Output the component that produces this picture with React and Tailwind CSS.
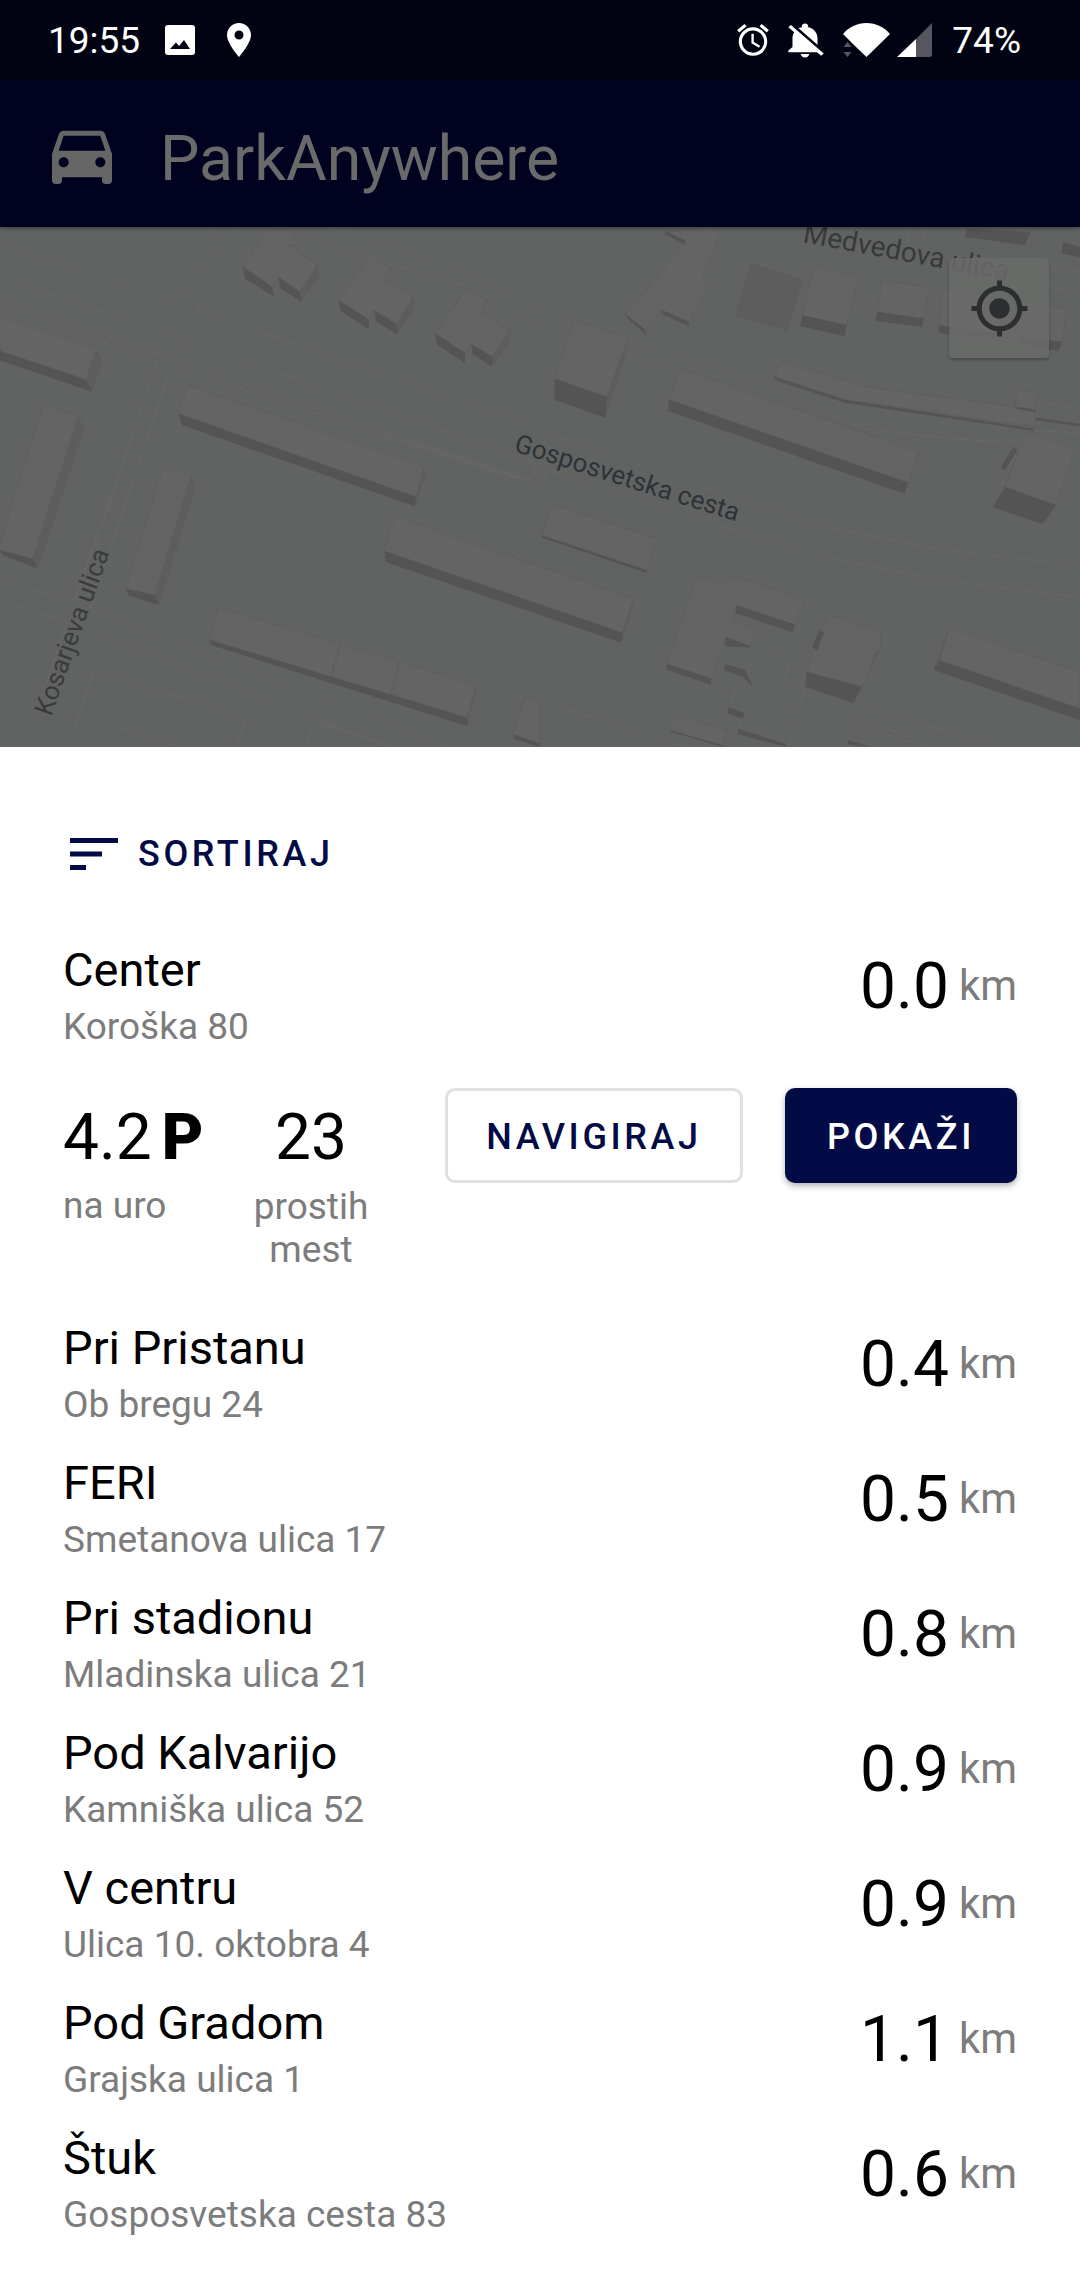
import React from "react";

// map shapes are noted per quadrant of the map, q() turns them into page pixels
const q = (ox, oy, pts) => pts.map(([x, y]) => `${(ox + x / 2.904).toFixed(1)},${(oy + y / 3).toFixed(1)}`).join(" ");

const quadrants = [
    {
        o: [0, 0],
        lines: [
            [[0, 50], [518, 228], [620, 5]],
            [[0, 150], [487, 320], [463, 382], [0, 212]],
            [[0, 235], [457, 405], [335, 780], [215, 1125]],
            [[680, 0], [570, 250], [1568, 600]],
            [[527, 335], [505, 400], [1530, 760], [1555, 745], [1550, 705], [527, 335]],
            [[497, 420], [378, 780], [260, 1145]],
            [[497, 420], [1568, 775]],
            [[960, 0], [1340, 125], [1568, 235]],
            [[870, 15], [1130, 110], [1350, 175], [1568, 295]],
        ],
        roofs: [
            [[0, 268], [280, 365], [250, 458], [0, 372]],
            [[125, 533], [228, 567], [95, 995], [0, 970], [0, 950]],
            [[473, 720], [555, 745], [450, 1105], [365, 1085]],
            [[545, 475], [1230, 718], [1208, 810], [518, 560]],
            [[775, 5], [845, 5], [862, 50], [838, 55], [922, 112], [870, 195], [808, 150], [790, 180], [705, 120]],
            [[1078, 80], [1135, 125], [1115, 155], [1200, 212], [1150, 290], [1087, 250], [1070, 278], [983, 220]],
            [[1358, 180], [1415, 222], [1397, 255], [1480, 312], [1430, 390], [1368, 350], [1350, 378], [1264, 320]],
        ],
        walls: [
            [[280, 365], [298, 405], [268, 495], [250, 458]],
            [[228, 567], [245, 603], [110, 1025], [95, 995]],
            [[555, 745], [568, 780], [462, 1135], [450, 1105]],
            [[1230, 718], [1235, 750], [1205, 838], [1208, 810]],
            [[922, 112], [928, 145], [876, 225], [870, 195]],
            [[1200, 212], [1205, 240], [1153, 322], [1150, 290]],
            [[1480, 312], [1485, 340], [1430, 420], [1430, 390]],
        ],
        sides: [
            [[0, 372], [250, 458], [268, 495], [0, 400]],
            [[0, 970], [95, 995], [110, 1025], [10, 985], [0, 975]],
            [[365, 1085], [450, 1105], [462, 1135], [372, 1105]],
            [[518, 560], [1208, 810], [1205, 838], [530, 595]],
            [[705, 120], [790, 180], [797, 210], [712, 155]],
            [[808, 150], [870, 195], [876, 225], [815, 185]],
            [[983, 220], [1070, 278], [1072, 308], [990, 252]],
            [[1087, 250], [1150, 290], [1153, 322], [1092, 282]],
            [[1264, 320], [1350, 378], [1350, 408], [1268, 352]],
            [[1368, 350], [1430, 390], [1430, 420], [1372, 382]],
        ],
    },
    {
        o: [540, 0],
        lines: [
            [[0, 240], [100, 280]],
            [[0, 290], [60, 315]],
            [[255, 335], [700, 490], [940, 605], [1200, 635], [1420, 650]],
            [[250, 380], [410, 440]],
            [[1075, 60], [1060, 0]],
            [[1125, 70], [1105, 0]],
            [[1125, 70], [1190, 90]],
            [[1480, 120], [1568, 135]],
            [[1470, 180], [1568, 195]],
            [[1448, 525], [1568, 545]],
            [[1435, 610], [1568, 618]],
            [[1448, 525], [1440, 572]],
            [[0, 610], [470, 780]],
            [[20, 730], [0, 790]],
            [[20, 730], [140, 770]],
            [[1340, 780], [1410, 615]],
        ],
        roofs: [
            [[500, 0], [527, 15], [470, 155], [485, 180], [432, 285], [355, 250], [305, 310], [248, 260], [420, 55], [365, 15]],
            [[100, 280], [255, 335], [195, 510], [42, 455]],
            [[795, 117], [925, 150], [890, 295], [762, 265]],
            [[992, 160], [1130, 180], [1115, 275], [980, 255]],
            [[1170, 190], [1330, 220], [1320, 320], [1158, 295]],
            [[1410, 235], [1528, 245], [1517, 345], [1395, 330]],
            [[407, 425], [1100, 675], [1070, 768], [375, 518]],
            [[700, 403], [950, 480], [1440, 548], [1438, 600], [885, 518], [682, 450]],
            [[1385, 490], [1445, 497], [1440, 548], [1380, 540]],
            [[1410, 615], [1555, 665], [1498, 835], [1350, 780]],
        ],
        dark: [
            [[612, 110], [760, 158], [720, 310], [570, 265]],
        ],
        walls: [
            [[255, 335], [195, 510], [190, 572], [250, 380]],
        ],
        sides: [
            [[248, 260], [305, 310], [307, 323], [250, 270]],
            [[355, 250], [432, 285], [432, 298], [355, 260]],
            [[365, 12], [423, 42], [420, 52], [363, 22]],
            [[42, 455], [195, 510], [190, 572], [42, 518]],
            [[762, 265], [890, 295], [885, 328], [755, 298]],
            [[980, 255], [1115, 275], [1110, 300], [975, 282]],
            [[1160, 295], [1320, 318], [1320, 335], [1157, 318]],
            [[1395, 330], [1517, 345], [1505, 372], [1392, 350]],
            [[1240, 5], [1425, 15], [1408, 55], [1235, 30]],
            [[1520, 45], [1568, 60], [1568, 90], [1515, 80]],
            [[375, 518], [1070, 768], [1058, 800], [372, 552]],
            [[682, 450], [885, 518], [1435, 605], [1435, 612], [885, 527], [680, 458]],
            [[1440, 572], [1568, 590], [1568, 598], [1440, 580]],
            [[1380, 540], [1440, 548], [1440, 555], [1382, 545]],
            [[1375, 660], [1387, 670], [1350, 730], [1337, 720]],
            [[1350, 780], [1498, 835], [1460, 892], [1315, 840]],
        ],
    },
    {
        o: [0, 260],
        lines: [
            [[0, 278], [215, 345], [330, 0]],
            [[260, 365], [378, 0]],
            [[260, 365], [1300, 780]],
            [[0, 340], [195, 405], [70, 780]],
            [[258, 428], [1130, 780]],
            [[270, 550], [712, 692], [690, 780]],
            [[270, 550], [230, 685], [520, 780]],
            [[230, 685], [195, 780]],
            [[912, 702], [1150, 780]],
            [[912, 702], [890, 780]],
        ],
        roofs: [
            [[1145, 88], [1840, 335], [1808, 438], [1115, 192]],
            [[635, 362], [990, 472], [960, 570], [607, 458]],
            [[990, 472], [1160, 525], [1135, 622], [960, 570]],
            [[1160, 525], [1385, 595], [1355, 692], [1135, 622]],
            [[1525, 628], [1568, 640], [1568, 770], [1490, 742]],
        ],
        walls: [
            [[1840, 335], [1808, 438], [1805, 468], [1836, 360]],
            [[1385, 595], [1355, 692], [1358, 718], [1380, 625]],
        ],
        sides: [
            [[1115, 192], [1808, 438], [1805, 468], [1120, 225]],
            [[607, 458], [1355, 692], [1358, 718], [615, 475]],
            [[1490, 742], [1568, 770], [1568, 780], [1492, 755]],
        ],
    },
    {
        o: [540, 260],
        lines: [
            [[190, 0], [500, 110], [850, 215], [1200, 285], [1568, 330]],
            [[470, 0], [850, 125], [1180, 190], [1568, 235]],
            [[625, 475], [728, 507], [707, 585], [770, 605], [720, 780]],
            [[575, 590], [548, 660]],
            [[575, 725], [595, 678]],
            [[0, 640], [450, 790]],
            [[945, 660], [1300, 770]],
            [[945, 660], [920, 680], [930, 700], [1080, 750]],
            [[908, 712], [1160, 790]],
            [[908, 712], [895, 760]],
        ],
        roofs: [
            [[35, 52], [340, 155], [310, 250], [5, 145]],
            [[458, 268], [525, 292], [575, 270], [768, 340], [738, 420], [570, 355], [558, 400], [625, 428], [612, 480], [540, 450], [498, 575], [368, 530]],
            [[845, 385], [990, 435], [988, 490], [935, 600], [775, 555], [815, 420]],
            [[1190, 422], [1568, 555], [1568, 665], [1160, 520]],
            [[390, 683], [545, 730], [530, 775], [378, 730]],
        ],
        walls: [
            [[1190, 422], [1160, 520], [1142, 548], [1170, 465]],
            [[988, 490], [958, 545], [972, 495]],
        ],
        sides: [
            [[5, 145], [310, 250], [310, 258], [5, 152]],
            [[368, 530], [498, 575], [495, 593], [367, 548]],
            [[570, 355], [740, 412], [735, 437], [568, 378]],
            [[538, 450], [612, 478], [610, 482], [538, 478]],
            [[775, 555], [935, 600], [910, 648], [770, 600]],
            [[812, 430], [825, 437], [805, 490], [790, 480]],
            [[1142, 548], [1160, 520], [1568, 665], [1568, 700]],
            [[538, 530], [595, 550], [620, 602], [590, 570], [535, 550]],
            [[545, 660], [595, 678], [590, 695], [545, 680]],
            [[575, 725], [715, 772], [715, 780], [575, 742]],
            [[378, 730], [530, 775], [530, 780], [380, 735]],
            [[895, 760], [960, 780], [895, 772]],
        ],
    },
];

const stations = [
    ["Pri Pristanu", "Ob bregu 24", "0.4"],
    ["FERI", "Smetanova ulica 17", "0.5"],
    ["Pri stadionu", "Mladinska ulica 21", "0.8"],
    ["Pod Kalvarijo", "Kamniška ulica 52", "0.9"],
    ["V centru", "Ulica 10. oktobra 4", "0.9"],
    ["Pod Gradom", "Grajska ulica 1", "1.1"],
    ["Štuk", "Gosposvetska cesta 83", "0.6"],
];

const StatusBar = () => (
    <div className="h-[80px] bg-[#020312] flex items-center pl-[48px] pr-[59px] text-white">
        <span className="text-[37px] leading-none mt-[1px]">19:55</span>
        <svg viewBox="0 0 30 30" className="w-[30px] h-[30px] ml-[25px]" fill="#fff">
            <path d="M3 0h24a3 3 0 0 1 3 3v24a3 3 0 0 1-3 3H3a3 3 0 0 1-3-3V3a3 3 0 0 1 3-3zm2 24h20l-6-9-5 6-3-3.5z" fillRule="evenodd" />
        </svg>
        <svg viewBox="0 0 24 34" className="w-[24px] h-[34px] ml-[32px]" fill="#fff">
            <path d="M12 0C5.4 0 0 5.3 0 12c0 8.500 12 22 12 22s12-13.500 12-22C24 5.300 18.600 0 12 0zm0 16.500a4.500 4.500 0 1 1 0-9 4.500 4.500 0 0 1 0 9z" fillRule="evenodd" />
        </svg>
        <div className="flex-1" />
        <svg viewBox="0 0 24 24" className="w-[38px] h-[38px]" fill="#fff">
            <path d="M22 5.720l-4.600-3.860-1.290 1.530 4.600 3.860L22 5.720zM7.880 3.390L6.600 1.860 2 5.710l1.290 1.530 4.590-3.850zM12.500 8H11v6l4.750 2.850.75-1.230-4-2.370V8zM12 4c-4.970 0-9 4.030-9 9s4.030 9 9 9 9-4.030 9-9-4.030-9-9-9zm0 16c-3.870 0-7-3.130-7-7s3.130-7 7-7 7 3.130 7 7-3.130 7-7 7z" />
        </svg>
        <svg viewBox="0 0 24 24" preserveAspectRatio="none" className="w-[50px] h-[42px] ml-[8px]" fill="#fff">
            <path d="M20 18.690L7.840 6.140 5.270 3.490 4 4.760l2.800 2.800v.01c-.52.99-.8 2.160-.8 3.420v5l-2 2v1h13.730l2 2L21 19.720l-1-1.030zM12 22c1.110 0 2-.89 2-2h-4c0 1.110.89 2 2 2zm6-7.320V11c0-3.080-1.640-5.640-4.500-6.320V4c0-.83-.67-1.500-1.500-1.500s-1.500.67-1.500 1.500v.68c-.15.03-.29.08-.42.120-.1.030-.2.070-.3.110h-.01c-.2.080-.4.170-.59.270-.1.050-.2.100-.300.160l9.120 9.360z" />
        </svg>
        <svg viewBox="0 0 47 34" className="w-[47px] h-[34px] ml-[13px]">
            <path d="M0 11C6 4 14 0 23.500 0S41 4 47 11L23.500 34 12 23z" fill="#fff" />
            <path d="M4.500 19l4 5h-8zM4.500 34l-4-5h8z" fill="#55565f" />
        </svg>
        <svg viewBox="0 0 35 34" className="w-[35px] h-[34px] ml-[7px]">
            <path d="M35 0v32a2 2 0 0 1-2 2H19V16z" fill="#55565f" />
            <path d="M19 16v18H0z" fill="#fff" />
        </svg>
        <span className="text-[37px] leading-none ml-[20px] mt-[1px]">74%</span>
    </div>
);

const AppBar = () => (
    <div className="relative z-10 h-[147px] bg-[#01021f] shadow-[0_2px_3px_rgba(0,0,0,0.3)] flex items-center pl-[42px]">
        <svg viewBox="0 0 24 24" className="w-[80px] h-[80px]" fill="#666666">
            <path d="M18.920 6.010C18.720 5.420 18.160 5 17.500 5h-11c-.66 0-1.210.42-1.420 1.010L3 12v8c0 .55.45 1 1 1h1c.55 0 1-.45 1-1v-1h12v1c0 .55.45 1 1 1h1c.55 0 1-.45 1-1v-8l-2.080-5.990zM6.500 16c-.83 0-1.500-.67-1.500-1.500S5.670 13 6.500 13s1.500.67 1.500 1.500S7.330 16 6.500 16zm11 0c-.83 0-1.500-.67-1.500-1.500s.67-1.500 1.500-1.500 1.500.67 1.500 1.500-.67 1.500-1.500 1.500zM5 11l1.500-4.500h11L19 11H5z" />
        </svg>
        <span className="ml-[38px] mt-[11px] text-[62.500px] leading-none text-[#6a6a6a]">ParkAnywhere</span>
    </div>
);

const MapView = () => (
    <div className="relative h-[520px] bg-[#616362] overflow-hidden">
        <svg viewBox="0 0 1080 520" className="block w-[1080px] h-[520px]">
            {quadrants.map(({ o, lines, roofs, dark = [], walls, sides }, n) => (
                <g key={n}>
                    {lines.map((r, i) => (
                        <polyline key={i} points={q(o[0], o[1], r)} fill="none" stroke="#676867" strokeWidth="1" />
                    ))}
                    {roofs.map((r, i) => (
                        <polygon key={i} points={q(o[0], o[1], r)} fill="#636463" stroke="#5a5b5a" strokeWidth="0.6" />
                    ))}
                    {dark.map((r, i) => (
                        <polygon key={i} points={q(o[0], o[1], r)} fill="#5c5d5c" stroke="#595a59" strokeWidth="0.6" />
                    ))}
                    {walls.map((r, i) => (
                        <polygon key={i} points={q(o[0], o[1], r)} fill="#5c5d5c" />
                    ))}
                    {sides.map((r, i) => (
                        <polygon key={i} points={q(o[0], o[1], r)} fill="#545454" />
                    ))}
                </g>
            ))}
            <text transform="translate(513 224) rotate(17.500)" fontSize="26" fill="#2f3237">Gosposvetska cesta</text>
            <text transform="translate(802 15) rotate(10.600)" fontSize="28" fill="#38393b">Medvedova ulica</text>
            <text transform="translate(51 490) rotate(-70.400)" fontSize="26" fill="#3a3b3c">Kosarjeva ulica</text>
        </svg>
        <div className="absolute left-[949px] top-[31px] w-[100px] h-[100px] rounded-[4px] bg-[#6a6b6a]/85 shadow-[0_2px_3px_rgba(0,0,0,0.25)] flex items-center justify-center">
            <svg viewBox="0 0 24 24" className="w-[61px] h-[61px]" fill="#2d2e2f">
                <path d="M12 8c-2.210 0-4 1.790-4 4s1.790 4 4 4 4-1.790 4-4-1.790-4-4-4zm8.940 3c-.46-4.170-3.770-7.480-7.940-7.940V1h-2v2.060C6.830 3.520 3.520 6.830 3.060 11H1v2h2.060c.46 4.170 3.770 7.480 7.940 7.940V23h2v-2.060c4.170-.46 7.480-3.770 7.940-7.940H23v-2h-2.060zM12 19c-3.870 0-7-3.130-7-7s3.130-7 7-7 7 3.130 7 7-3.130 7-7 7z" />
            </svg>
        </div>
    </div>
);

const Station = ({ name, address, km }) => (
    <div className="h-[135px] flex items-center justify-between">
        <div>
            <div className="text-[47px] leading-[52px] text-black">{name}</div>
            <div className="text-[37px] leading-[48px] mt-[7px] text-[#7c7c7c]">{address}</div>
        </div>
        <div className="flex items-baseline -mt-[22px]">
            <span className="text-[64px] leading-none text-black">{km}</span>
            <span className="text-[42px] leading-none text-[#7c7c7c] ml-[10px] relative top-[-8px]">km</span>
        </div>
    </div>
);

export default function App() {
    return (
        <div className="w-[1080px] h-[2280px] bg-white overflow-hidden font-['Roboto',sans-serif]">
            <StatusBar />
            <AppBar />
            <MapView />

            <div className="px-[63px]">
                <div className="h-[183px] pt-[87px] flex items-start">
                    <div className="h-[40px] flex items-center">
                        <svg viewBox="0 0 48 32" className="w-[48px] h-[32px] ml-[7px]" fill="#020b45">
                            <rect x="0" y="0" width="48" height="5" />
                            <rect x="0" y="13.500" width="32" height="5" />
                            <rect x="0" y="27" width="16" height="5" />
                        </svg>
                        <span className="ml-[20px] text-[36px] font-medium tracking-[0.1em] text-[#020b45]">SORTIRAJ</span>
                    </div>
                </div>

                <Station name="Center" address="Koroška 80" km="0.0" />

                <div className="h-[243px] pt-[23px] flex items-start">
                    <div className="w-[138px]">
                        <div className="h-[95px] flex items-center pt-[4px]">
                            <span className="text-[64px] leading-none text-black">4.2</span>
                            <span className="text-[64px] leading-none font-black text-black ml-[10px]">P</span>
                        </div>
                        <div className="text-[37px] leading-[42px] text-[#7c7c7c] mt-[2px]">na uro</div>
                    </div>
                    <div className="w-[140px] ml-[40px] text-center">
                        <div className="h-[95px] flex items-center justify-center pt-[4px] text-[64px] leading-none text-black">23</div>
                        <div className="text-[37px] leading-[43px] text-[#7c7c7c] mt-[2px]">prostih<br />mest</div>
                    </div>
                    <button className="ml-[64px] w-[298px] h-[95px] rounded-[10px] border-[3px] border-[#e0e0e0] bg-white pt-[2px] text-[36px] font-medium tracking-[0.1em] text-[#020b45]">NAVIGIRAJ</button>
                    <button className="ml-[42px] w-[232px] h-[95px] rounded-[10px] bg-[#020b45] shadow-[0_3px_6px_rgba(0,0,0,0.3)] pt-[2px] text-[36px] font-medium tracking-[0.1em] text-white">POKAŽI</button>
                </div>

                {stations.map(([name, address, km]) => (
                    <Station key={name} name={name} address={address} km={km} />
                ))}
            </div>
        </div>
    );
}
